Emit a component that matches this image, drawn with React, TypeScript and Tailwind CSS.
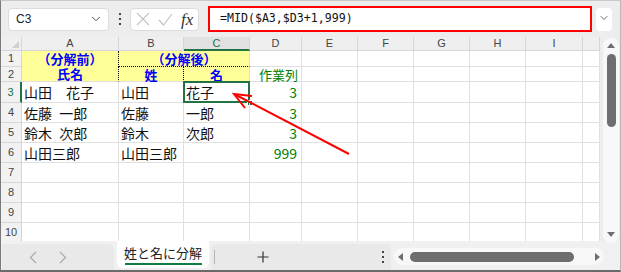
import React from 'react';
import { ChevronDown } from 'lucide-react';

const letters = ['A', 'B', 'C', 'D', 'E', 'F', 'G', 'H', 'I', ''];

const dataRows = [
  { n: 3, a: '山田　花子', b: '山田', c: '花子', d: '3' },
  { n: 4, a: '佐藤 一郎', b: '佐藤', c: '一郎', d: '3' },
  { n: 5, a: '鈴木 次郎', b: '鈴木', c: '次郎', d: '3' },
  { n: 6, a: '山田三郎', b: '山田三郎', c: '', d: '999' },
];

const line = 'border-r border-b border-[#e0e0e0]';
const jp = "font-['Noto_Sans_CJK_JP',sans-serif]";
const ui = "font-['Liberation_Sans',Arial,sans-serif]";

function RowHead({ n, active = false }: { n: number; active?: boolean }) {
  return (
    <div
      className={`flex items-center justify-center bg-[#f2f2f2] border-b border-[#d6d6d6] text-[11px] leading-none ${ui} ${
        active ? 'text-[#217346] border-r-2 border-r-[#217346] bg-[#e3e3e3]' : 'text-[#444] border-r'
      }`}
    >
      {n}
    </div>
  );
}

function Blank({ count }: { count: number }) {
  return (
    <>
      {Array.from({ length: count }).map((_, i) => (
        <div key={i} className={line} />
      ))}
    </>
  );
}

function Sheet() {
  return (
    <div className="w-[599px] h-[204px] overflow-hidden bg-white">
      <div
        className={`grid grid-cols-[21px_97px_65px_66px_52px_56px_56px_56px_56px_57px_17px] grid-rows-[14px_16px_15px_21px_20px_20px_20px_20px_20px_20px_20px] text-[14px] ${jp}`}
      >
        {/* column headers */}
        <div className="relative bg-[#efefef] border-r border-b border-[#d6d6d6]">
          <div className="absolute right-[2px] bottom-[2px] w-0 h-0 border-l-[7px] border-l-transparent border-b-[7px] border-b-[#cfcfcf]" />
        </div>
        {letters.map((l, i) => (
          <div
            key={i}
            className={`flex items-center justify-center text-[11px] leading-none ${ui} ${
              l === 'C'
                ? 'bg-[#e1e1e1] text-[#217346] border-r border-r-[#d6d6d6] border-b-2 border-b-[#217346]'
                : 'bg-[#efefef] text-[#444] border-r border-b border-[#d6d6d6]'
            }`}
          >
            {l}
          </div>
        ))}

        {/* row 1 */}
        <RowHead n={1} />
        <div className="flex items-start justify-center pt-[2px] bg-[#ffff99] border-r border-dotted border-r-black text-[13px] text-[#0000ff] font-bold leading-[12px] whitespace-nowrap">
          （分解前）
        </div>
        <div className="col-span-2 flex items-center justify-center bg-[#ffff99] border-b border-r border-dotted border-b-black border-r-[#e0e0e0] [border-right-style:solid] text-[13px] text-[#0000ff] font-bold leading-none whitespace-nowrap">
          （分解後）
        </div>
        <Blank count={7} />

        {/* row 2 */}
        <RowHead n={2} />
        <div className="flex items-end justify-center pb-[1px] bg-[#ffff99] border-r border-b border-dotted border-r-black border-b-[#e0e0e0] [border-bottom-style:solid] text-[13px] text-[#0000ff] font-bold leading-[12px]">
          氏名
        </div>
        <div className="flex items-center justify-center bg-[#ffff99] border-r border-b border-dotted border-r-black border-b-[#e0e0e0] [border-bottom-style:solid] text-[13px] text-[#0000ff] font-bold leading-none">
          姓
        </div>
        <div className={`flex items-center justify-center bg-[#ffff99] ${line} text-[13px] text-[#0000ff] font-bold leading-none`}>
          名
        </div>
        <div className={`flex items-center justify-end pr-[3px] ${line} text-[13px] text-[#008000] leading-none whitespace-nowrap`}>
          作業列
        </div>
        <Blank count={6} />

        {/* data rows */}
        {dataRows.map((r) => (
          <React.Fragment key={r.n}>
            <RowHead n={r.n} active={r.n === 3} />
            <div className={`flex items-center pl-[2px] ${line} text-[#111] leading-none whitespace-pre [word-spacing:4px]`}>
              {r.a}
            </div>
            <div className={`flex items-center pl-[2px] ${line} text-[#111] leading-none whitespace-nowrap`}>{r.b}</div>
            <div className={`relative flex items-center pl-[2px] ${line} text-[#111] leading-none whitespace-nowrap`}>
              {r.c}
              {r.n === 3 && (
                <>
                  <div className="absolute -top-[1px] -left-[1px] -right-[1px] -bottom-[1px] border-2 border-[#217346]" />
                  <div className="absolute -right-[4px] -bottom-[4px] w-[6px] h-[6px] bg-[#217346] border border-white" />
                </>
              )}
            </div>
            <div className={`flex items-center justify-end pr-[4px] ${line} text-[#008000] leading-none`}>{r.d}</div>
            <Blank count={6} />
          </React.Fragment>
        ))}

        {/* empty rows */}
        {[7, 8, 9, 10].map((n) => (
          <React.Fragment key={n}>
            <RowHead n={n} />
            <Blank count={10} />
          </React.Fragment>
        ))}
      </div>
    </div>
  );
}

function Dots() {
  return (
    <div className="flex flex-col gap-[3px]">
      <span className="block w-[2px] h-[2px] bg-[#444]" />
      <span className="block w-[2px] h-[2px] bg-[#444]" />
      <span className="block w-[2px] h-[2px] bg-[#444]" />
    </div>
  );
}

function FormulaBar() {
  return (
    <div className="h-[36px] flex items-center pl-[7px] bg-[#ededed]">
      <div className={`w-[101px] h-[23px] flex items-center justify-between pl-[7px] pr-[5px] bg-white border border-[#dcdcdc] rounded-[4px] text-[12px] text-[#222] ${ui}`}>
        <span>C3</span>
        <ChevronDown size={14} strokeWidth={1.6} className="text-[#444]" />
      </div>
      <div className="ml-[10px]">
        <Dots />
      </div>
      <div className="ml-[9px] w-[69px] h-[23px] flex items-center pl-[5px] gap-[8px] bg-white border border-[#dcdcdc] rounded-[4px]">
        <svg width="14" height="14" viewBox="0 0 14 14">
          <path d="M1 1 L13 13 M13 1 L1 13" stroke="#c4c4c4" strokeWidth="1.2" fill="none" />
        </svg>
        <svg width="15" height="13" viewBox="0 0 15 13">
          <path d="M1 7 L5.5 12 L14 1" stroke="#c4c4c4" strokeWidth="1.2" fill="none" />
        </svg>
        <span className="font-['Liberation_Serif',serif] italic text-[17px] leading-none text-[#333]">fx</span>
      </div>
      <div className="ml-[9px] w-[384px] h-[26px] flex items-center pl-[10px] bg-white border-2 border-[#ff0000]">
        <span className="font-['DejaVu_Sans_Mono',monospace] text-[11.6px] text-[#111] leading-none">=MID($A3,$D3+1,999)</span>
      </div>
      <div className="ml-[4px] w-[16px] h-[23px] flex items-start justify-center pt-[4px] bg-white rounded-[4px]">
        <ChevronDown size={12} strokeWidth={1.6} className="text-[#444]" />
      </div>
    </div>
  );
}

function VScroll() {
  return (
    <div className="w-[20px] h-[204px] bg-[#ededed] pl-[3px] pt-[1px]">
      <div className="w-[16px] h-[205px] flex flex-col items-center bg-[#f8f8f8] rounded-[8px] pt-[5px] pb-[6px]">
        <div className="w-0 h-0 border-l-[4px] border-r-[4px] border-b-[5px] border-l-transparent border-r-transparent border-b-[#6e6e6e]" />
        <div className="mt-[6px] w-[9px] h-[73px] rounded-full bg-[#6e6e6e]" />
        <div className="flex-1" />
        <div className="w-0 h-0 border-l-[4px] border-r-[4px] border-t-[5px] border-l-transparent border-r-transparent border-t-[#6e6e6e]" />
      </div>
    </div>
  );
}

function BottomBar() {
  return (
    <div className="h-[29px] flex items-stretch bg-[#f0f0f0]">
      <div className="mt-[3px] ml-[1px] w-[112px] flex items-center gap-[22px] pl-[27px] bg-[#e9e9e9] rounded-tr-[6px]">
        <svg width="8" height="13" viewBox="0 0 8 13">
          <path d="M7 1 L1.5 6.5 L7 12" stroke="#aaaaaa" strokeWidth="1.2" fill="none" />
        </svg>
        <svg width="8" height="13" viewBox="0 0 8 13">
          <path d="M1 1 L6.5 6.5 L1 12" stroke="#aaaaaa" strokeWidth="1.2" fill="none" />
        </svg>
      </div>
      <div className="ml-[3px] w-[92px] h-[27px] flex flex-col items-center justify-center bg-white rounded-b-[6px]">
        <span className={`${jp} text-[13px] leading-none text-[#222] mt-[1px]`}>姓と名に分解</span>
        <span className="mt-[4px] block w-[77px] h-[2px] bg-[#107c41]" />
      </div>
      <div className="mt-[3px] ml-[2px] w-[180px] flex items-center bg-[#e9e9e9] rounded-tl-[6px]">
        <span className="ml-[3px] block w-px h-[14px] bg-[#b5b5b5]" />
        <svg className="ml-[42px]" width="12" height="12" viewBox="0 0 12 12">
          <path d="M6 0.5 V11.5 M0.5 6 H11.5" stroke="#333" strokeWidth="1.2" fill="none" />
        </svg>
        <div className="flex-1" />
        <div className="mr-[7px]">
          <Dots />
        </div>
      </div>
      <div className="ml-[3px] mt-[7px] w-[210px] h-[17px] flex items-center px-[4px] bg-[#f8f8f8] rounded-full">
        <div className="w-0 h-0 border-t-[4px] border-b-[4px] border-r-[5px] border-t-transparent border-b-transparent border-r-[#6e6e6e]" />
        <div className="ml-[7px] w-[164px] h-[10px] rounded-full bg-[#6e6e6e]" />
        <div className="flex-1" />
        <div className="w-0 h-0 border-t-[4px] border-b-[4px] border-l-[5px] border-t-transparent border-b-transparent border-l-[#6e6e6e]" />
      </div>
    </div>
  );
}

export default function App() {
  return (
    <div className="relative w-[621px] h-[272px] overflow-hidden bg-[#ededed] border-t border-r border-t-[#c8c8c8] border-r-[#b8b8b8] border-l border-b-2 border-l-[#7a7a7a] border-b-[#6a6a6a]">
      <FormulaBar />
      <div className="flex">
        <Sheet />
        <VScroll />
      </div>
      <BottomBar />
      <svg className="absolute left-0 top-0 pointer-events-none" width="621" height="272" viewBox="0 0 621 272">
        <line x1="348" y1="153" x2="235" y2="94" stroke="#ff0000" strokeWidth="2" />
        <polyline points="251,95 233,93 244,107" stroke="#ff0000" strokeWidth="2" fill="none" strokeLinejoin="miter" />
      </svg>
    </div>
  );
}
